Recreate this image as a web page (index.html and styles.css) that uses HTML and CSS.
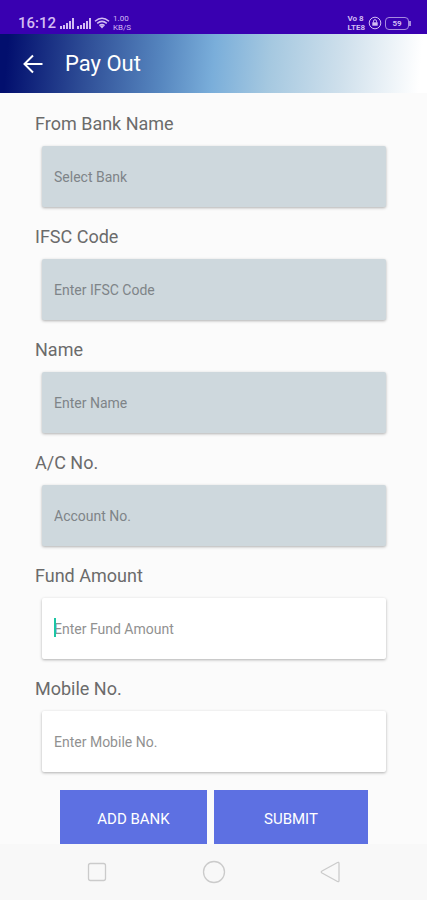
FILE: index.html
```html
<!DOCTYPE html>
<html lang="en">
<head>
<meta charset="utf-8">
<meta name="viewport" content="width=device-width, initial-scale=1">
<title>Pay Out</title>
<link rel="stylesheet" href="styles.css">
</head>
<body>
<div class="status">
  <div class="status-group">
    <span class="clock">16:12</span>
    <svg class="signal" width="14" height="12" viewBox="0 0 14 12" aria-hidden="true"><path d="M1 9v3M4 8v4M7 6v6M10 4v8M13 1v11"/></svg>
    <svg class="signal" width="14" height="12" viewBox="0 0 14 12" aria-hidden="true"><path d="M1 9v3M4 8v4M7 6v6M10 4v8M13 1v11"/></svg>
    <svg class="wifi" width="16" height="12" viewBox="0 0 16 12" aria-hidden="true"><path d="M1 4.2Q8-1.8 15 4.2M3.2 6.4Q8 2.4 12.8 6.4M5.4 8.6Q8 6.4 10.6 8.6"/><path class="solid" d="M5.8 9Q8 7.4 10.2 9L8 11.6Z"/></svg>
    <span class="stack"><span>1.00</span><span>KB/S</span></span>
  </div>
  <div class="status-group">
    <span class="stack stack-bold"><span>Vo 8</span><span>LTE8</span></span>
    <svg class="lock" width="14" height="14" viewBox="0 0 14 14" aria-hidden="true"><circle cx="7" cy="7" r="5.8"/><path d="M5.5 6.5V5.2a1.5 1.5 0 0 1 3 0v1.3"/><path class="solid" d="M4.3 6.3h5.4v3.4H4.3z"/></svg>
    <span class="battery">59</span>
  </div>
</div>
<header class="bar">
  <button class="back" type="button" aria-label="Back"><svg width="22" height="22" viewBox="0 0 22 22" aria-hidden="true"><path d="M20.5 11H3M11 2.5L2.5 11l8.5 8.5"/></svg></button>
  <h1>Pay Out</h1>
</header>
<main>
  <form class="form">
    <div class="row"><label for="bank">From Bank Name</label><div class="field"><input class="locked" id="bank" type="text" placeholder="Select Bank" readonly></div></div>
    <div class="row"><label for="ifsc">IFSC Code</label><div class="field"><input class="locked" id="ifsc" type="text" placeholder="Enter IFSC Code" readonly></div></div>
    <div class="row"><label for="name">Name</label><div class="field"><input class="locked" id="name" type="text" placeholder="Enter Name" readonly></div></div>
    <div class="row"><label for="account">A/C No.</label><div class="field"><input class="locked" id="account" type="text" placeholder="Account No." readonly></div></div>
    <div class="row"><label for="amount">Fund Amount</label><div class="field"><input id="amount" type="text" inputmode="decimal" placeholder="Enter Fund Amount"><span class="caret"></span></div></div>
    <div class="row"><label for="mobile">Mobile No.</label><div class="field"><input id="mobile" type="tel" placeholder="Enter Mobile No."></div></div>
    <div class="actions">
      <button class="add" type="button">ADD BANK</button>
      <button class="submit" type="submit">SUBMIT</button>
    </div>
  </form>
</main>
<nav class="system" aria-label="System">
  <button type="button" aria-label="Recent apps"><svg width="24" height="24" viewBox="0 0 24 24" aria-hidden="true"><rect x="3.5" y="3.5" width="17" height="17" rx="2"/></svg></button>
  <button type="button" aria-label="Home"><svg width="24" height="24" viewBox="0 0 24 24" aria-hidden="true"><circle cx="12" cy="12" r="10.5"/></svg></button>
  <button type="button" aria-label="Back"><svg width="24" height="24" viewBox="0 0 24 24" aria-hidden="true"><path d="M19.5 2.5Q21 1.8 21 3.5V20.5Q21 22.2 19.5 21.5L4 13Q2.5 12 4 11Z"/></svg></button>
</nav>
</body>
</html>
```
FILE: styles.css
```css
* {
  box-sizing: border-box;
}

body {
  margin: 0;
  min-height: 100vh;
  display: flex;
  flex-direction: column;
  background: #fbfbfb;
  color: #6b6b6b;
  font-family: Roboto, sans-serif;
}

button,
input {
  font: inherit;
  border: 0;
}

svg {
  display: block;
  fill: none;
}

/* Status bar */
.status {
  display: flex;
  justify-content: space-between;
  height: 34px;
  padding: 12px 18px 0;
  background: #3900b1;
  color: #d3bcf3;
}

.status-group {
  display: flex;
  align-items: center;
  gap: 3px;
  height: 22px;
}

.clock {
  font-size: 15px;
  line-height: 22px;
  font-weight: 500;
  margin-right: 1px;
}

.signal,
.wifi,
.lock {
  stroke: #d3bcf3;
}

.signal {
  stroke-width: 2;
}

.wifi {
  stroke-width: 1.5;
}

.solid {
  fill: #d3bcf3;
  stroke: none;
}

.stack {
  display: flex;
  flex-direction: column;
  font-size: 8px;
  line-height: 9px;
}

.stack-bold {
  font-weight: 700;
}

.battery {
  position: relative;
  width: 24px;
  height: 13px;
  border: 1px solid #a78ae0;
  border-radius: 4px;
  font-size: 8px;
  line-height: 11px;
  font-weight: 700;
  text-align: center;
}

.battery::after {
  content: "";
  position: absolute;
  top: 3px;
  right: -3px;
  width: 2px;
  height: 5px;
  background: #a78ae0;
}

/* App bar */
.bar {
  display: flex;
  align-items: center;
  gap: 21px;
  height: 59px;
  padding: 0 22px;
  background: linear-gradient(95deg, #020f6e 2%, #2e4d96 20%, #5686bf 38%, #7aaeda 50%, #a5c8e0 63%, #cfe0ec 80%, #fff 98%);
  color: #fff;
}

.back {
  padding: 0;
  background: none;
}

.back svg {
  stroke: #fff;
  stroke-width: 2;
}

h1 {
  margin: 0;
  font-size: 22px;
  line-height: 28px;
  font-weight: 400;
}

/* Form */
main {
  flex: 1;
}

.form {
  padding: 19px 41px 0 35px;
}

.row {
  margin-bottom: 18px;
}

label {
  display: block;
  margin-bottom: 10px;
  font-size: 18px;
  line-height: 24px;
}

.field {
  position: relative;
  margin-left: 7px;
}

input {
  display: block;
  width: 100%;
  height: 61px;
  padding: 0 12px;
  border-radius: 2px;
  background: #fff;
  box-shadow: 0 1px 3px #0000004d;
  font-size: 14px;
  outline: 0;
}

.locked {
  background: #ced8dd;
}

input::placeholder {
  color: #919191;
  opacity: 1;
}

.locked::placeholder {
  color: #7e8488;
}

.caret {
  position: absolute;
  top: 20px;
  left: 12px;
  width: 2px;
  height: 19px;
  background: #1bc6a4;
}

.actions {
  display: flex;
  gap: 7px;
  padding: 0 18px 0 25px;
}

.actions button {
  height: 54px;
  padding: 3px 0 0;
  background: #5d70e2;
  color: #fff;
  font-size: 15px;
}

.add {
  flex: 147;
}

.submit {
  flex: 154;
}

/* System navigation */
.system {
  display: flex;
  justify-content: space-between;
  padding: 16px 85px;
  background: #f8f8f8;
}

.system button {
  padding: 0;
  background: none;
}

.system svg {
  stroke: #cbcbcb;
  stroke-width: 1.3;
}
```
